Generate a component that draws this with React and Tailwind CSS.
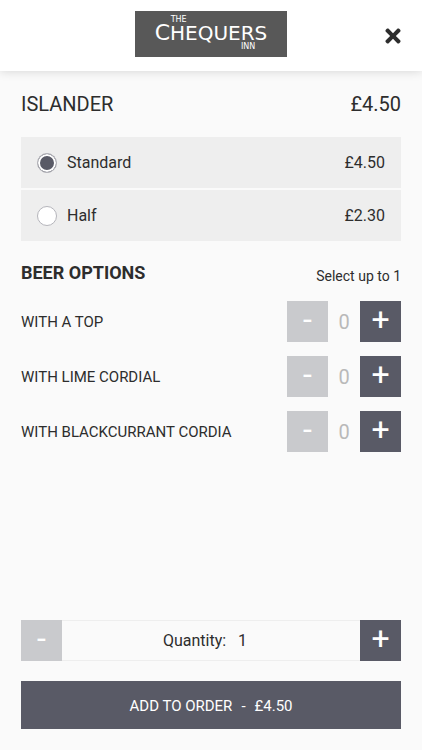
import React, { useState } from 'react';
import { FaTimes } from 'react-icons/fa';

const sizes = [
    { id: 'standard', name: 'Standard', price: 4.5 },
    { id: 'half', name: 'Half', price: 2.3 }
];

const extras = [
    { id: 'top', name: 'WITH A TOP' },
    { id: 'lime', name: 'WITH LIME CORDIAL' },
    { id: 'blackcurrant', name: 'WITH BLACKCURRANT CORDIA' }
];

const MAX_EXTRAS = 1;

const formatPrice = (value) => `£${value.toFixed(2)}`;

function StepButton({ sign, label, disabled, onClick }) {
    return (
        <button
            type="button"
            aria-label={label}
            disabled={disabled}
            onClick={onClick}
            className="flex size-[41px] shrink-0 items-center justify-center bg-[#595a66] pb-1.5 text-[32px] leading-none text-white disabled:bg-[#c9cacd]"
        >
            {sign}
        </button>
    );
}

function Logo() {
    return (
        <div className="flex h-[46px] w-[152px] flex-col items-center justify-center bg-[#585858] font-['DejaVu_Sans',sans-serif] text-white">
            <div className="flex flex-col">
                <span className="pl-4 text-[8px] leading-[8px]">THE</span>
                <span className="text-[20px] leading-[18px] whitespace-nowrap">
                    <span className="text-[22px] leading-[18px]">C</span>HEQUERS
                </span>
                <span className="pr-3 text-right text-[8px] leading-[10px]">INN</span>
            </div>
        </div>
    );
}

function App() {
    const [size, setSize] = useState('standard');
    const [counts, setCounts] = useState({});
    const [quantity, setQuantity] = useState(1);

    const selected = sizes.find((s) => s.id === size);
    const extrasTotal = Object.values(counts).reduce((sum, n) => sum + n, 0);

    const changeCount = (id, step) => {
        setCounts({ ...counts, [id]: (counts[id] || 0) + step });
    };

    return (
        <div className="flex min-h-screen flex-col bg-[#fafafa] font-[Roboto,sans-serif] text-[#2d2d2d]">
            <header className="grid grid-cols-[1fr_auto_1fr] items-center bg-white px-[18px] pt-[11px] pb-[14px] shadow-[0_0_10px_rgba(0,0,0,0.16)]">
                <span />
                <Logo />
                <button type="button" aria-label="Close" className="justify-self-end pt-1">
                    <FaTimes size={22} />
                </button>
            </header>

            <main className="flex flex-col px-[21px] pt-[19px]">
                <div className="flex items-center justify-between text-xl leading-7">
                    <h1>ISLANDER</h1>
                    <span>{formatPrice(selected.price)}</span>
                </div>

                <div className="mt-[19px] flex flex-col gap-0.5">
                    {sizes.map((option) => (
                        <label
                            key={option.id}
                            className="flex h-[51px] items-center bg-[#eee] px-4 text-base"
                        >
                            <input
                                type="radio"
                                name="size"
                                value={option.id}
                                checked={size === option.id}
                                onChange={() => setSize(option.id)}
                                className="size-5 appearance-none rounded-full border border-[#b5b5bb] bg-white checked:bg-[#595a66] checked:shadow-[inset_0_0_0_2px_white]"
                            />
                            <span className="ml-[10px] flex-1">{option.name}</span>
                            <span>{formatPrice(option.price)}</span>
                        </label>
                    ))}
                </div>

                <div className="mt-[18px] flex items-end justify-between">
                    <h2 className="text-lg leading-7 font-bold">BEER OPTIONS</h2>
                    <span className="text-sm leading-[22px]">Select up to {MAX_EXTRAS}</span>
                </div>

                <div className="mt-[14px] flex flex-col gap-[14px]">
                    {extras.map((extra) => {
                        const count = counts[extra.id] || 0;
                        return (
                            <div key={extra.id} className="flex items-center justify-between">
                                <span className="pt-0.5 text-[15px]">{extra.name}</span>
                                <div className="flex items-center">
                                    <StepButton
                                        sign="-"
                                        label={`Remove ${extra.name}`}
                                        disabled={count === 0}
                                        onClick={() => changeCount(extra.id, -1)}
                                    />
                                    <span className="w-8 text-center text-xl text-[#b9b9b9]">{count}</span>
                                    <StepButton
                                        sign="+"
                                        label={`Add ${extra.name}`}
                                        onClick={() => extrasTotal < MAX_EXTRAS && changeCount(extra.id, 1)}
                                    />
                                </div>
                            </div>
                        );
                    })}
                </div>
            </main>

            <footer className="mt-auto flex flex-col gap-5 px-[21px] pt-5 pb-[21px]">
                <div className="flex">
                    <StepButton
                        sign="-"
                        label="Decrease quantity"
                        disabled={quantity === 1}
                        onClick={() => setQuantity(quantity - 1)}
                    />
                    <div className="flex flex-1 items-center justify-center gap-3 border-y border-[#eee] pr-3 text-base">
                        <span>Quantity:</span>
                        <span>{quantity}</span>
                    </div>
                    <StepButton
                        sign="+"
                        label="Increase quantity"
                        onClick={() => setQuantity(quantity + 1)}
                    />
                </div>
                <button
                    type="button"
                    className="flex h-12 items-center justify-center gap-[9px] bg-[#595a66] pt-0.5 text-[15px] text-white"
                >
                    <span>ADD TO ORDER</span>
                    <span>-</span>
                    <span>{formatPrice(selected.price * quantity)}</span>
                </button>
            </footer>
        </div>
    );
}

export default App;
